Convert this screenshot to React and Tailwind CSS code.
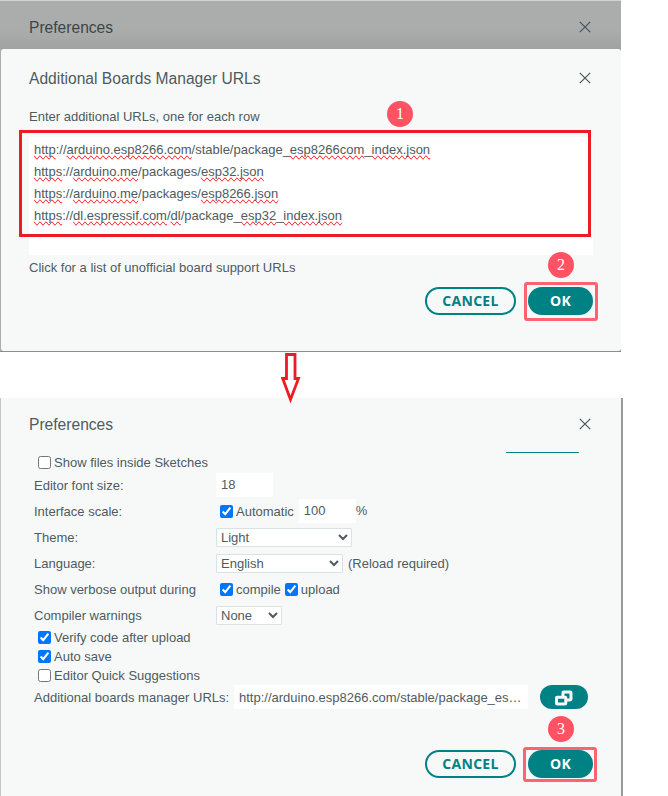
const Close = ({ className = "" }) => (
  <svg className={`text-[#46535a] ${className}`} width="12" height="12" viewBox="0 0 12 12" fill="none" stroke="currentColor" strokeWidth="1.15">
    <path d="M0.8 0.8 L11.2 11.2 M11.2 0.8 L0.8 11.2" />
  </svg>
);

const Bad = ({ children }) => <span className="[text-decoration-line:spelling-error]">{children}</span>;

const Badge = ({ n, className }) => (
  <div className={`absolute flex h-[26px] w-[26px] items-center justify-center rounded-full bg-[#ff5263] pb-px font-['Liberation_Serif',serif] text-[16px] leading-none text-white ${className}`}>
    {n}
  </div>
);

const Buttons = () => (
  <div className="flex gap-3 font-['Open_Sans',sans-serif] text-[14px] font-bold tracking-[0.3px]">
    <button className="h-7 w-[91px] rounded-full border-2 border-[#008184] leading-none text-[#008184]">CANCEL</button>
    <button className="h-7 w-[65px] rounded-full bg-[#008184] leading-none text-white">OK</button>
  </div>
);

const Check = ({ label, checked, className = "" }) => (
  <label className="flex items-center">
    <input type="checkbox" readOnly checked={!!checked} className="mr-[3px] ml-1 h-[13px] w-[13px]" />
    <span className={className}>{label}</span>
  </label>
);

const Row = ({ label, children }) => (
  <div className="flex h-[26px] items-center">
    <div className="w-[182px] shrink-0 pt-px">{label}</div>
    {children}
  </div>
);

const Select = ({ value, className }) => (
  <select className={`h-[19px] rounded-[1px] border border-[#dae3e3] bg-white ${className}`}>
    <option>{value}</option>
  </select>
);

export default function App() {
  return (
    <div className="relative h-[796px] w-[668px] overflow-hidden bg-white font-['Liberation_Sans',Arial,sans-serif] text-[13px] text-[#4e5b61]">
      <section className="h-[352px] w-[621px] border-t border-b border-t-[#d0d3d2] border-b-[#8b8e8d] bg-[#abadac]">
        <header className="flex h-12 items-center justify-between bg-linear-to-b from-[#abadac] from-60% to-[#a0a2a1] pt-1 pr-[30px] pl-[29px] text-[15.6px] text-[#3c4649]">
          <span className="pt-px">Preferences</span>
          <Close />
        </header>
        <div className="ml-px h-[302px] rounded-[3px] bg-[#f7f9f9] pr-7 pl-7">
          <div className="flex h-[58px] items-center justify-between pr-[2px] text-[15.6px]">
            <span className="pt-px">Additional Boards Manager URLs</span>
            <Close />
          </div>
          <div className="h-[30px] leading-[19px]">Enter additional URLs, one for each row</div>
          <div className="h-[118px] w-[564px] bg-white pt-[2px] pl-[5px] leading-[22px]">
            <div><Bad>http</Bad>://<Bad>arduino.esp8266.com</Bad>/stable/package_<Bad>esp8266com</Bad>_<Bad>index.json</Bad></div>
            <div><Bad>https</Bad>://<Bad>arduino.me</Bad>/packages/<Bad>esp32.json</Bad></div>
            <div><Bad>https</Bad>://<Bad>arduino.me</Bad>/packages/<Bad>esp8266.json</Bad></div>
            <div><Bad>https</Bad>://<Bad>dl.espressif.com</Bad>/<Bad>dl</Bad>/package_<Bad>esp32</Bad>_<Bad>index.json</Bad></div>
          </div>
          <div className="h-8 pt-[3px] leading-[19px]">Click for a list of unofficial board support URLs</div>
          <div className="flex justify-end"><Buttons /></div>
        </div>
      </section>

      <div className="h-[46px]" />

      <section className="h-[398px] w-[623px] border-r-2 border-l border-r-[#989b9a] border-l-[#c4c6c6] bg-[#f7f9f9]">
        <header className="flex h-[54px] items-center justify-between pr-[30px] pb-px pl-7 text-[15.6px]">
          <span className="pt-px">Preferences</span>
          <Close className="mb-px" />
        </header>
        <div className="flex h-5 items-start justify-between pr-[42px] pl-[33px]">
          <div className="flex h-[21px] items-center"><Check label="Show files inside Sketches" /></div>
          <div className="h-px w-[73px] rounded-full bg-[#008184]" />
        </div>
        <div className="pl-[33px]">
          <Row label="Editor font size:">
            <div className="h-6 w-[57px] bg-white pl-[5px] leading-[23px]">18</div>
          </Row>
          <Row label="Interface scale:">
            <Check label="Automatic" checked className="pt-px" />
            <div className="ml-[5px] h-6 w-[57px] bg-white pl-[5px] leading-[23px]">100</div>%
          </Row>
          <Row label="Theme:"><Select value="Light" className="w-[136px]" /></Row>
          <Row label="Language:">
            <Select value="English" className="w-[127px]" />
            <span className="ml-[5px] pt-px">(Reload required)</span>
          </Row>
          <Row label="Show verbose output during">
            <Check label="compile" checked className="pt-px" />
            <Check label="upload" checked className="pt-px" />
          </Row>
          <Row label="Compiler warnings"><Select value="None" className="w-[66px]" /></Row>
          <div className="flex h-[19px] items-center"><Check label="Verify code after upload" checked /></div>
          <div className="flex h-[19px] items-center"><Check label="Auto save" checked /></div>
          <div className="flex h-[19px] items-center"><Check label="Editor Quick Suggestions" /></div>
          <div className="flex h-6 items-center">
            <div className="w-[200px] pt-px">Additional boards manager URLs:</div>
            <div className="h-6 w-[294px] bg-white pl-[5px] leading-[25px]">http://arduino.esp8266.com/stable/package_es…</div>
            <button className="ml-3 flex h-6 w-12 items-center justify-center rounded-full bg-[#008184]">
              <svg className="mt-[2px]" width="18" height="16" viewBox="0 0 18 16" fill="none" stroke="#f7f9f9" strokeWidth="3">
                <rect x="8" y="1.9" width="8" height="8" rx="0.8" />
                <rect x="1.5" y="7.2" width="9.3" height="6.9" rx="0.8" fill="#008184" />
              </svg>
            </button>
          </div>
        </div>
        <div className="mt-[41px] flex justify-end pr-7"><Buttons /></div>
      </section>

      <svg className="absolute top-[353px] left-[281px]" width="20" height="50" viewBox="0 0 20 50" fill="#fff" stroke="#ed1c24" strokeWidth="2.8">
        <path d="M5.5 1.5 H14 V25.5 H17.5 L9.5 46.5 L1.7 25.5 H5.5 Z" />
      </svg>
      <div className="absolute top-[130px] left-[19px] h-[107px] w-[572px] border-3 border-[#ed1c24]" />
      <div className="absolute top-[282px] left-[524px] h-[39px] w-[74px] rounded-[3px] border-3 border-[#ff5263]/90" />
      <div className="absolute top-[747px] left-[523px] h-[35px] w-[74px] rounded-[3px] border-3 border-[#ff5263]/90" />
      <Badge n="1" className="top-[101px] left-[387px]" />
      <Badge n="2" className="top-[252px] left-[548px]" />
      <Badge n="3" className="top-[716px] left-[548px]" />
    </div>
  );
}
